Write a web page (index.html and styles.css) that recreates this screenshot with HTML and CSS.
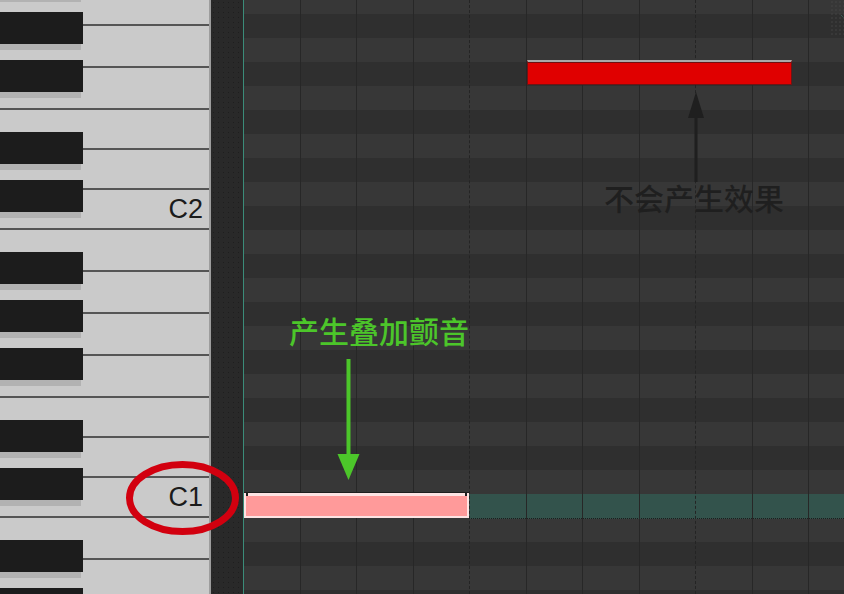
FILE: index.html
```html
<!DOCTYPE html>
<html lang="zh">
  <head>
    <meta charset="UTF-8" />
    <meta name="viewport" content="width=device-width, initial-scale=1.0" />
    <title>Piano Roll</title>
    <link rel="stylesheet" href="styles.css">
  </head>
  <body>
    <main class="roll">
      <div class="keys">
        <div class="whites">
          <div class="w"></div>
          <div class="w"></div>
          <div class="w"></div>
          <div class="w s"></div>
          <div class="w s"></div>
          <div class="w s">C2</div>
          <div class="w"></div>
          <div class="w"></div>
          <div class="w"></div>
          <div class="w"></div>
          <div class="w s"></div>
          <div class="w s"></div>
          <div class="w s">C1</div>
          <div class="w"></div>
          <div class="w"></div>
        </div>
        <div class="blacks">
          <div class="b"></div>
          <div class="b"></div>
          <div class="b"></div>
          <div class="b far"></div>
          <div class="b"></div>
          <div class="b far"></div>
          <div class="b"></div>
          <div class="b"></div>
          <div class="b far"></div>
          <div class="b"></div>
          <div class="b far"></div>
          <div class="b"></div>
        </div>
      </div>
      <div class="divider"></div>
      <div class="gutter"></div>

      <div class="grid">
        <div class="band"></div>
        <div class="beats">
          <div class="beat"></div>
          <div class="beat"></div>
          <div class="beat"></div>
          <div class="beat"></div>
          <div class="beat"></div>
          <div class="beat"></div>
          <div class="beat"></div>
          <div class="beat"></div>
          <div class="beat"></div>
          <div class="beat"></div>
          <div class="beat"></div>
        </div>
        <div class="note note--pink"></div>
        <div class="note note--red"></div>
        <div class="corner">
          <svg width="36" height="36" viewBox="0 0 36 36">
            <path d="M11 15 L17 21 L23 15" fill="none" stroke="#3f6d63" stroke-width="1" stroke-dasharray="1 1" />
          </svg>
        </div>
      </div>

      <!-- annotations -->
      <svg class="marks" width="844" height="594" viewBox="0 0 844 594">
        <ellipse cx="182.5" cy="498" rx="53" ry="33.5" fill="none" stroke="#d2000f" stroke-width="7" />
        <rect x="346.5" y="359" width="4" height="96" fill="#4cc62a" />
        <polygon points="337.5,454 359.5,454 348.5,480" fill="#4cc62a" />
        <rect x="694.5" y="115" width="3" height="67" fill="#1f1f1f" />
        <polygon points="688,118 704,118 696,92" fill="#1f1f1f" />
      </svg>
      <span class="label label--green">产生叠加颤音</span>
      <span class="label label--dark">不会产生效果</span>
    </main>
  </body>
</html>
```

FILE: styles.css
```css
body {
  margin: 0;
  background: #2c2c2c;
}

.roll {
  position: relative;
  display: flex;
  width: 844px;
  height: 594px;
  overflow: hidden;
}

/* Keyboard */
.keys {
  position: relative;
  width: 209px;
  flex: none;
  background: #cacaca;
  overflow: hidden;
}

.whites {
  margin-top: -18px;
}

.w {
  box-sizing: border-box;
  height: 42px;
  border-top: 2px solid #555;
  display: flex;
  justify-content: flex-end;
  align-items: flex-end;
  padding: 0 6px 5px 0;
  font: 27px/27px "Liberation Sans", Arial, sans-serif;
  color: #1b1b1b;
}

.w.s {
  height: 40px;
}

.blacks {
  position: absolute;
  top: -36px;
  left: 0;
  display: flex;
  flex-direction: column;
}

.b {
  position: relative;
  flex: none;
  width: 83px;
  height: 32px;
  margin-top: 16px;
  background: #1c1c1c;
}

.b:first-child {
  margin-top: 0;
}

.b.far {
  margin-top: 40px;
}

.b::after {
  content: "";
  position: absolute;
  left: 0;
  top: 32px;
  width: 81px;
  height: 6px;
  background: #b2b2b2;
}

.divider {
  width: 2px;
  flex: none;
  background: #9d9d9d;
}

.gutter {
  width: 32px;
  flex: none;
  background-color: #292929;
  background-image: radial-gradient(#1e1e1e 0.7px, transparent 0.9px);
  background-size: 5px 5px;
}

/* Note grid */
.grid {
  position: relative;
  flex: 1;
  border-left: 1px solid #3b8c79;
  background-image: linear-gradient(#2f2f2f 0 24px, #373737 24px 48px);
  background-size: 100% 48px;
  background-position: 0 14px;
}

.band {
  position: absolute;
  left: 225px;
  right: 0;
  top: 494px;
  height: 24px;
  background: #33534c;
  border-bottom: 1px dotted #1d1d1d;
}

.beats {
  position: relative;
  display: flex;
  height: 100%;
}

.beat {
  box-sizing: border-box;
  flex: 0 0 56.5px;
  border-right: 1px solid #272727;
}

.beat:nth-child(4n) {
  border-right-style: dashed;
  border-right-color: #242424;
}

.note {
  position: absolute;
  box-sizing: border-box;
}

.note--pink {
  left: 0;
  top: 493px;
  width: 225px;
  height: 25px;
  background: #ff9a9a;
  border: 2px solid #fde3e3;
  border-top: 3px solid #fde3e3;
  box-shadow: 0 -1px 0 #1e1e1e;
}

.note--pink::before,
.note--pink::after {
  content: "";
  position: absolute;
  top: -3px;
  width: 2px;
  height: 3px;
  background: #1e1e1e;
}

.note--pink::before {
  left: 0;
}

.note--pink::after {
  right: 0;
}

.note--red {
  left: 283px;
  top: 60px;
  width: 265px;
  height: 25px;
  background: #e00000;
  border: 1px solid #6e1414;
  border-top: 2px solid #a9a9a9;
  box-shadow: inset 0 1px 0 #701010;
}

.corner {
  position: absolute;
  top: 0;
  right: 0;
  width: 36px;
  height: 36px;
  background-image: radial-gradient(#434343 0.6px, transparent 0.8px);
  background-size: 4px 4px;
}

/* Annotations */
.marks {
  position: absolute;
  top: 0;
  left: 0;
  pointer-events: none;
}

.label {
  position: absolute;
  font: 500 30px/30px "Noto Sans CJK SC", sans-serif;
  white-space: nowrap;
}

.label--green {
  left: 289px;
  top: 315px;
  color: #4cc62a;
}

.label--dark {
  left: 604px;
  top: 182px;
  color: #1f1f1f;
}
```
